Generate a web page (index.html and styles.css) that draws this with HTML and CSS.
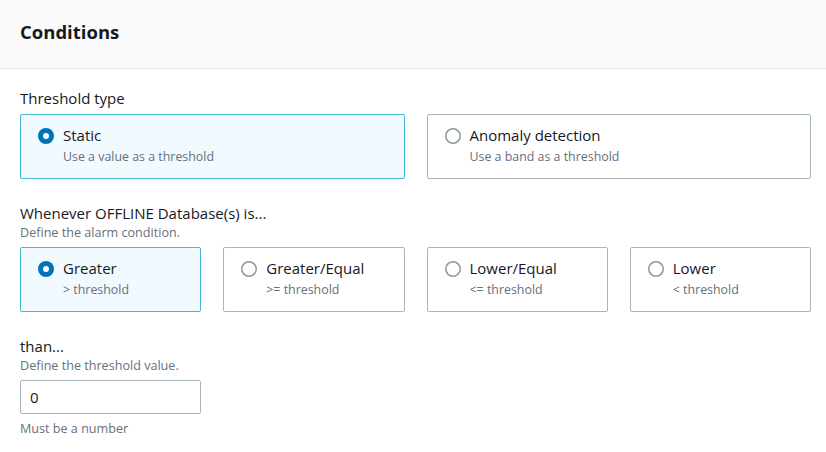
FILE: index.html
```html
<!DOCTYPE html>
<html>
<head>
<meta charset="utf-8">
<link rel="stylesheet" href="styles.css">
</head>
<body>
<div class="panel">
  <div class="panel-header"><h2 class="title">Conditions</h2></div>
  <div class="panel-body">
    <div class="field">
      <div class="label">Threshold type</div>
      <div class="tiles tiles-2">
        <div class="tile selected">
          <svg class="radio" width="16" height="16" viewBox="0 0 16 16"><circle cx="8" cy="8" r="8" fill="#0073bb"/><circle cx="8" cy="8" r="3" fill="#fff"/></svg>
          <div class="tile-text"><div class="tile-title">Static</div><div class="tile-desc">Use a value as a threshold</div></div>
        </div>
        <div class="tile">
          <svg class="radio" width="16" height="16" viewBox="0 0 16 16"><circle cx="8" cy="8" r="7.25" fill="#fff" stroke="#8d9999" stroke-width="1.5"/></svg>
          <div class="tile-text"><div class="tile-title">Anomaly detection</div><div class="tile-desc">Use a band as a threshold</div></div>
        </div>
      </div>
    </div>
    <div class="field">
      <div class="label">Whenever OFFLINE Database(s) is...</div>
      <div class="hint">Define the alarm condition.</div>
      <div class="tiles tiles-4">
        <div class="tile selected">
          <svg class="radio" width="16" height="16" viewBox="0 0 16 16"><circle cx="8" cy="8" r="8" fill="#0073bb"/><circle cx="8" cy="8" r="3" fill="#fff"/></svg>
          <div class="tile-text"><div class="tile-title">Greater</div><div class="tile-desc">&gt; threshold</div></div>
        </div>
        <div class="tile">
          <svg class="radio" width="16" height="16" viewBox="0 0 16 16"><circle cx="8" cy="8" r="7.25" fill="#fff" stroke="#8d9999" stroke-width="1.5"/></svg>
          <div class="tile-text"><div class="tile-title">Greater/Equal</div><div class="tile-desc">&gt;= threshold</div></div>
        </div>
        <div class="tile">
          <svg class="radio" width="16" height="16" viewBox="0 0 16 16"><circle cx="8" cy="8" r="7.25" fill="#fff" stroke="#8d9999" stroke-width="1.5"/></svg>
          <div class="tile-text"><div class="tile-title">Lower/Equal</div><div class="tile-desc">&lt;= threshold</div></div>
        </div>
        <div class="tile">
          <svg class="radio" width="16" height="16" viewBox="0 0 16 16"><circle cx="8" cy="8" r="7.25" fill="#fff" stroke="#8d9999" stroke-width="1.5"/></svg>
          <div class="tile-text"><div class="tile-title">Lower</div><div class="tile-desc">&lt; threshold</div></div>
        </div>
      </div>
    </div>
    <div class="field">
      <div class="label">than...</div>
      <div class="hint">Define the threshold value.</div>
      <div class="input">0</div>
      <div class="hint after">Must be a number</div>
    </div>
  </div>
</div>
</body>
</html>
```
FILE: styles.css
```css
* { box-sizing: border-box; }
html, body { margin: 0; padding: 0; background: #fff; }
body {
  font-family: "Open Sans", "Noto Sans", "Liberation Sans", sans-serif;
  color: #16191f;
  font-size: 15px;
  line-height: 20px;
}
.panel-header {
  background: #fafafa;
  border-bottom: 1px solid #eaeded;
  padding: 20px 20px 24px;
}
.title {
  margin: 0;
  font-size: 18.5px;
  line-height: 24px;
  font-weight: 700;
}
.panel-body {
  padding: 19px 15px 0 20px;
  display: flex;
  flex-direction: column;
  gap: 24px;
}
.label { font-size: 15px; line-height: 20px; }
.hint { font-size: 12.6px; line-height: 20px; color: #687078; }
.hint.after { margin-top: 5px; }
.tiles { display: grid; gap: 22px; margin-top: 6px; }
.hint + .tiles { margin-top: 4px; }
.tiles-2 { grid-template-columns: 1fr 1fr; }
.tiles-4 { grid-template-columns: repeat(4, 1fr); }
.tile {
  border: 1px solid #aab7b8;
  border-radius: 2px;
  background: #fff;
  padding: 10px 17px 12px;
  display: flex;
  align-items: flex-start;
  gap: 9px;
  height: 65px;
}
.tile.selected {
  border-color: #44b9d6;
  background: #f1faff;
}
.radio { flex: none; margin-top: 2.5px; }
.tile-title { font-size: 15px; line-height: 21px; color: #16191f; }
.tile-desc { font-size: 12.4px; line-height: 21px; color: #687078; }
.input {
  margin-top: 4px;
  width: 181px;
  height: 34px;
  border: 1px solid #aab7b8;
  border-radius: 2px;
  padding: 6px 9px;
  font-size: 15px;
  line-height: 20px;
}
```
